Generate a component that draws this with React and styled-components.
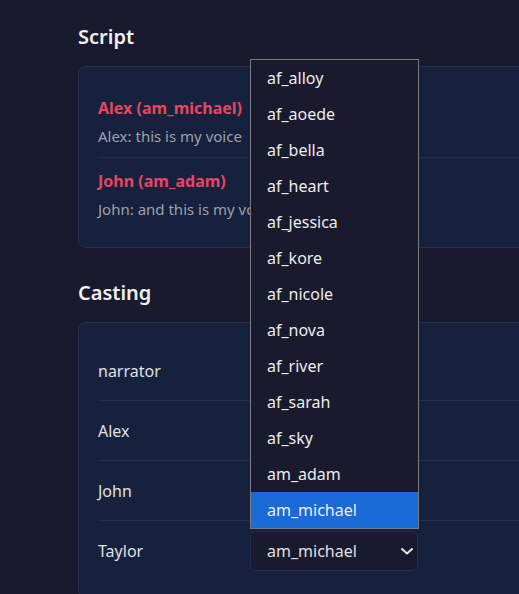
import styled, { createGlobalStyle } from "styled-components";

const GlobalStyle = createGlobalStyle`
  html, body {
    margin: 0;
    padding: 0;
    background: #1a1a2e;
    overflow: hidden;
  }
  body {
    font-family: "Segoe UI", "Noto Sans", sans-serif;
    color: #e0e0e0;
  }
`;

const VOICES = [
  "af_alloy",
  "af_aoede",
  "af_bella",
  "af_heart",
  "af_jessica",
  "af_kore",
  "af_nicole",
  "af_nova",
  "af_river",
  "af_sarah",
  "af_sky",
  "am_adam",
  "am_michael",
];

const Page = styled.main`
  padding: 23px 0 0 78px;
  width: 560px;
`;

const Section = styled.section`
  margin-bottom: 31px;
`;

const Heading = styled.h2`
  margin: 0 0 15px;
  font-size: 20px;
  line-height: 28px;
  font-weight: 600;
  color: #f0f0f0;
`;

const Card = styled.div`
  background: #16213e;
  border: 1px solid #2a2a4a;
  border-radius: 8px;
  padding: 18px 19px 17px;
`;

const Line = styled.div`
  padding: 12px 0 11px;
  & + & {
    border-top: 1px solid #2a2a4a;
  }
`;

const Speaker = styled.div`
  font-size: 16px;
  line-height: 22px;
  font-weight: 700;
  color: #e94560;
`;

const Said = styled.div`
  margin-top: 7px;
  font-size: 15px;
  line-height: 20px;
  color: #a0a0a8;
`;

const Row = styled.div`
  display: flex;
  align-items: center;
  gap: 12px;
  padding: 10px 0 9px;
  & + & {
    border-top: 1px solid #2a2a4a;
  }
`;

const Name = styled.div`
  width: 140px;
  font-size: 16px;
  color: #e0e0e0;
`;

const SelectWrap = styled.div`
  position: relative;
`;

const Select = styled.div`
  box-sizing: border-box;
  width: 168px;
  height: 40px;
  display: flex;
  align-items: center;
  justify-content: space-between;
  padding: 0 4px 0 16px;
  background: #1a1a2e;
  border: 1px solid #2a2a4a;
  border-radius: 6px;
  font-size: 16px;
  color: #e0e0e0;
  visibility: ${(p) => (p.$covered ? "hidden" : "visible")};
`;

const Popup = styled.ul`
  position: absolute;
  left: 0;
  bottom: calc(100% + 2px);
  box-sizing: border-box;
  width: 169px;
  margin: 0;
  padding: 0;
  list-style: none;
  background: #1a1a2e;
  border: 1px solid #7a7a80;
  z-index: 5;
`;

const Option = styled.li`
  height: 36px;
  display: flex;
  align-items: center;
  padding-left: 16px;
  font-size: 16px;
  color: #ececec;
  background: ${(p) => (p.$active ? "#1a6ad8" : "transparent")};
`;

function Chevron() {
  return (
    <svg width="12" height="7" viewBox="0 0 12 7" fill="none">
      <path
        d="M1 1 L6 5.5 L11 1"
        stroke="#e8e8e8"
        strokeWidth="2"
        strokeLinecap="round"
        strokeLinejoin="round"
      />
    </svg>
  );
}

const script = [
  { who: "Alex (am_michael)", text: "Alex: this is my voice" },
  { who: "John (am_adam)", text: "John: and this is my voice" },
];

const cast = ["narrator", "Alex", "John", "Taylor"];

export default function App() {
  return (
    <>
      <GlobalStyle />
      <Page>
        <Section>
          <Heading>Script</Heading>
          <Card>
            {script.map((l) => (
              <Line key={l.who}>
                <Speaker>{l.who}</Speaker>
                <Said>{l.text}</Said>
              </Line>
            ))}
          </Card>
        </Section>

        <Section>
          <Heading>Casting</Heading>
          <Card>
            {cast.map((name) => {
              const open = name === "Taylor";
              return (
                <Row key={name}>
                  <Name>{name}</Name>
                  <SelectWrap>
                    <Select $covered={!open}>
                      <span>am_michael</span>
                      <Chevron />
                    </Select>
                    {open && (
                      <Popup>
                        {VOICES.map((v) => (
                          <Option key={v} $active={v === "am_michael"}>
                            {v}
                          </Option>
                        ))}
                      </Popup>
                    )}
                  </SelectWrap>
                </Row>
              );
            })}
          </Card>
        </Section>
      </Page>
    </>
  );
}
